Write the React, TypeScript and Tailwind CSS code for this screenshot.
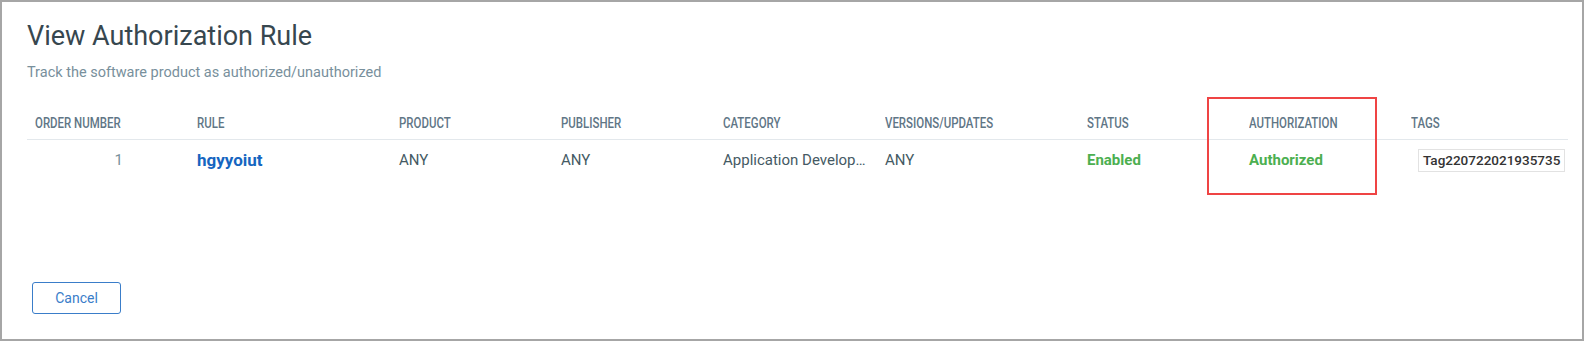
const columns = [
  { label: "ORDER NUMBER" },
  { label: "RULE" },
  { label: "PRODUCT" },
  { label: "PUBLISHER" },
  { label: "CATEGORY" },
  { label: "VERSIONS/UPDATES" },
  { label: "STATUS" },
  { label: "AUTHORIZATION" },
  { label: "TAGS" },
]

const grid =
  "grid grid-cols-[162px_202px_162px_162px_162px_202px_162px_162px_1fr]"

export default function App() {
  return (
    <div className="relative h-[341px] w-full border-2 border-[#a6a6a6] bg-white pl-[25px] pr-[14px] pt-[18px] font-['Roboto',sans-serif]">
      {/* Header */}
      <h1 className="text-[27px] leading-[32px] font-normal text-[#37474f]">
        View Authorization Rule
      </h1>
      <p className="mt-[11px] text-[14.5px] leading-[20px] text-[#78909c]">
        Track the software product as authorized/unauthorized
      </p>

      {/* Rules table */}
      <div className="mt-[30px]">
        <div className={`${grid} border-b border-[#e3e8ec]`}>
          {columns.map((col) => (
            <div key={col.label} className="h-[26px] pl-[8px] leading-[20px] whitespace-nowrap">
              <span className="inline-block origin-left scale-x-[0.79] text-[14.5px] font-medium text-[#5f7686]">
                {col.label}
              </span>
            </div>
          ))}
        </div>

        <div className={`${grid} pt-[9px] text-[15px] text-[#455a64]`}>
          <div className="flex h-[23px] items-center justify-end pr-[66px] text-[#78909c]">1</div>
          <div className="flex h-[23px] items-center pl-[8px] text-[17px] font-bold text-[#1565c0]">
            hgyyoiut
          </div>
          <div className="flex h-[23px] items-center pl-[8px]">ANY</div>
          <div className="flex h-[23px] items-center pl-[8px]">ANY</div>
          <div className="h-[23px] min-w-0 truncate pl-[8px] pr-[6px] leading-[23px]">
            Application Development
          </div>
          <div className="flex h-[23px] items-center pl-[8px]">ANY</div>
          <div className="flex h-[23px] items-center pl-[8px] font-bold text-[#4caf50]">Enabled</div>
          <div className="flex h-[23px] items-center pl-[8px] font-bold text-[#4caf50]">Authorized</div>
          <div className="flex h-[23px] items-center pl-[15px]">
            <span className="flex h-[23px] items-center whitespace-nowrap border border-[#e2e2e2] px-[4px] text-[13.5px] font-medium text-[#333333]">
              Tag220722021935735
            </span>
          </div>
        </div>
      </div>

      {/* Footer */}
      <button className="mt-[110px] ml-[5px] h-[32px] w-[89px] rounded-[3px] border border-[#3a7dc9] bg-white text-[14px] text-[#3a7dc9]">
        Cancel
      </button>

      {/* Highlight annotation */}
      <div className="pointer-events-none absolute left-[1205px] top-[95px] h-[98px] w-[170px] border-2 border-[#ef4444]" />
    </div>
  )
}
